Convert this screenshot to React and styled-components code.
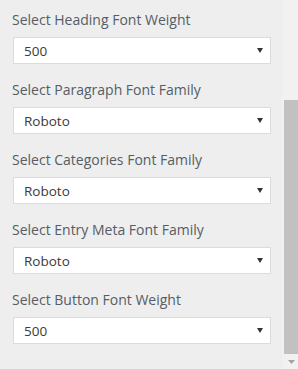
import React from "react";
import styled, { createGlobalStyle } from "styled-components";

const Global = createGlobalStyle`
  html, body { margin: 0; padding: 0; background: #eeeeee; }
  body { font-family: "Open Sans", "Segoe UI", sans-serif; }
`;

const Frame = styled.div`
  display: flex;
  width: 298px;
  height: 369px;
  overflow: hidden;
  background: #eeeeee;
`;

const Panel = styled.div`
  flex: 1;
  display: flex;
  flex-direction: column;
  gap: 16px;
  padding: 10px 11px 0 13px;
`;

const Field = styled.div`
  display: flex;
  flex-direction: column;
  gap: 7px;
`;

const Label = styled.label`
  font-size: 14px;
  line-height: 20px;
  color: #555d66;
  margin-left: -1px;
`;

const SelectBox = styled.div`
  display: flex;
  align-items: center;
  justify-content: space-between;
  height: 27px;
  box-sizing: border-box;
  background: #ffffff;
  border: 1px solid #dcdcdc;
  padding: 0 7px 0 10px;
  font-size: 13.5px;
  color: #3a3a3a;
`;

const Arrow = styled.svg`
  width: 6px;
  height: 5px;
  display: block;
`;

const ScrollTrack = styled.div`
  width: 16px;
  display: flex;
  flex-direction: column;
  align-items: flex-end;
  background: #f1f1f1;
`;

const Thumb = styled.div`
  width: 14px;
  height: 254px;
  margin-top: 100px;
  background: #c1c1c1;
`;

const ArrowButton = styled.div`
  flex: 1;
  width: 14px;
  display: flex;
  align-items: center;
  justify-content: center;
`;

const fields = [
  ["Select Heading Font Weight", "500"],
  ["Select Paragraph Font Family", "Roboto"],
  ["Select Categories Font Family", "Roboto"],
  ["Select Entry Meta Font Family", "Roboto"],
  ["Select Button Font Weight", "500"],
];

export default function App() {
  return (
    <>
      <Global />
      <Frame>
        <Panel>
          {fields.map(([label, value]) => (
            <Field key={label}>
              <Label>{label}</Label>
              <SelectBox>
                <span>{value}</span>
                <Arrow viewBox="0 0 6 5">
                  <path d="M0 0H6L3 5Z" fill="#333" />
                </Arrow>
              </SelectBox>
            </Field>
          ))}
        </Panel>
        <ScrollTrack>
          <Thumb />
          <ArrowButton>
            <svg width="7" height="4" viewBox="0 0 7 4">
              <path d="M0 0H7L3.5 4Z" fill="#a3a3a3" />
            </svg>
          </ArrowButton>
        </ScrollTrack>
      </Frame>
    </>
  );
}
